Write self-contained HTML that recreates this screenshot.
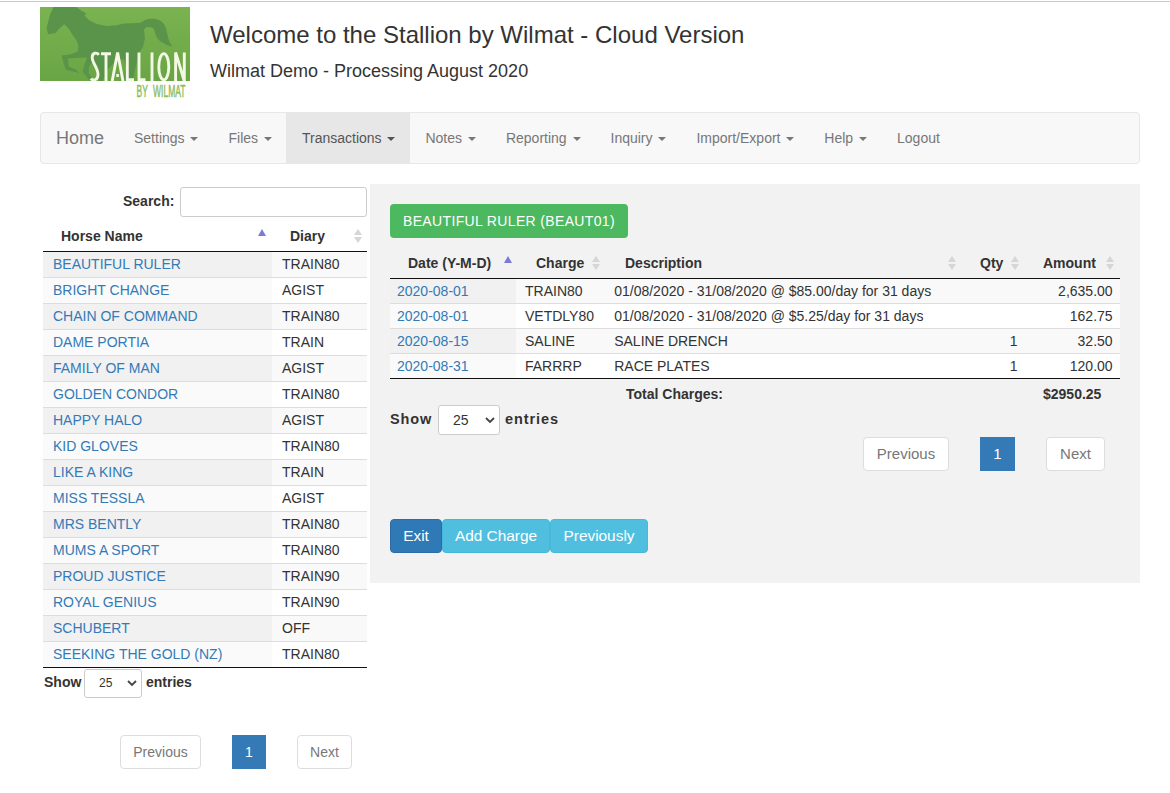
<!DOCTYPE html>
<html><head><meta charset="utf-8">
<style>
*{box-sizing:border-box;margin:0;padding:0}
html,body{width:1170px;height:793px;overflow:hidden;background:#fff}
body{font-family:"Liberation Sans",sans-serif;font-size:14px;color:#333;position:relative}
.abs{position:absolute}
#topline{left:0;top:1px;width:1170px;height:1px;background:#c9c9c9}
#logo{left:40px;top:7px;width:150px;height:74px;background:linear-gradient(#7ab04f,#6aa443);overflow:hidden}
.t1{left:210px;top:23px;font-size:24px;line-height:24px;color:#333;white-space:nowrap}
.t2{left:210px;top:62px;font-size:18px;line-height:18px;color:#333;white-space:nowrap}
#nav{left:40px;top:112px;width:1100px;height:52px;background:#f8f8f8;border:1px solid #e7e7e7;border-radius:4px}
#nav .brand{position:absolute;left:0;top:0;height:50px;padding:0 15px;font-size:18px;line-height:50px;color:#777}
#nav ul{position:absolute;left:78px;top:0;list-style:none;display:flex;height:50px}
#nav li{padding:0 15px;line-height:50px;color:#777;white-space:nowrap}
#nav li.act{background:#e7e7e7;color:#555;margin-left:-1px;padding-left:16px}
.caret{display:inline-block;width:0;height:0;margin-left:2px;vertical-align:middle;border-top:4px solid;border-right:4px solid transparent;border-left:4px solid transparent}
/* left table */
.lbl{font-weight:bold;white-space:nowrap}
.inp{border:1px solid #ccc;border-radius:3px;background:#fff}
.ltab{left:43px;width:324px}
.row{position:absolute;left:0;width:324px;height:26px;border-top:1px solid #ddd}
.row .c1{position:absolute;left:0;top:0;width:229px;height:25px}
.row .c2{position:absolute;left:229px;top:0;width:95px;height:25px}
.row .n{position:absolute;left:10px;top:4px;color:#337ab7;white-space:nowrap;line-height:16px}
.row .d{position:absolute;left:10px;top:4px;color:#333;white-space:nowrap;line-height:16px}
.odd .c1{background:#f1f1f1}.odd .c2{background:#f9f9f9}
.even .c1{background:#fafafa}.even .c2{background:#fff}
.pg{position:absolute;height:34px;border:1px solid #ddd;border-radius:4px;background:#fff;color:#777;text-align:center;line-height:32px;white-space:nowrap}
.pg.cur{background:#337ab7;border-color:#337ab7;color:#fff;border-radius:0}
.up{position:absolute;width:0;height:0;border-left:4px solid transparent;border-right:4px solid transparent;border-bottom:7px solid #7b7bd6}
.dbl{position:absolute;width:8px;height:15px}
.dbl:before{content:"";position:absolute;left:0;top:0;border-left:4px solid transparent;border-right:4px solid transparent;border-bottom:6px solid #d6d6d6}
.dbl:after{content:"";position:absolute;left:0;top:8px;border-left:4px solid transparent;border-right:4px solid transparent;border-top:6px solid #d6d6d6}
/* right panel */
#panel{left:370px;top:184px;width:770px;height:399px;background:#f2f2f2}
.btn{position:absolute;height:34px;border-radius:4px;color:#fff;text-align:center;line-height:34px;white-space:nowrap}
.rrow{position:absolute;left:390px;width:730px;height:25px;border-top:1px solid #ddd}
.rrow div{position:absolute;top:0;height:24px}
.rrow .dt{color:#337ab7}
.rrow span{position:absolute;top:4px;line-height:16px;white-space:nowrap}
.rodd .s{background:#f1f1f1}.rodd .o{background:#f9f9f9}
.reven .s{background:#fafafa}.reven .o{background:#fff}
</style></head><body>
<div id="topline" class="abs"></div>
<svg class="abs" style="left:40px;top:7px" width="150" height="91" viewBox="0 0 150 91">
<defs><linearGradient id="lg" x1="0" y1="0" x2="0" y2="1"><stop offset="0" stop-color="#7ab350"/><stop offset="1" stop-color="#6aa545"/></linearGradient><clipPath id="cl"><rect x="0" y="0" width="150" height="74"/></clipPath></defs>
<rect x="0" y="0" width="150" height="74" fill="url(#lg)"/>
<path d="M13.6,0 L36,0 L41.6,3.8 L46.4,6.6 L44.5,8.5 L49.2,13.2 L56.8,17 L66.2,19 L75,18.4 L84.2,16.6 L98.4,16.1 L102.2,15.1 C104,13 107,12 111,11.8 C118,11.5 122,14 124.5,18 C127,22 127,27 128.5,32 C129.5,35 131,37.5 132.4,39.7 C129,39 124,37 120,34 C116.5,31 115,27 114.5,23.7 C114,21.5 112.5,20.3 110,20.3 L106,20.3 L104,22.7 L105,31.2 L103,39.7 L98.4,47.3 L96.5,56.8 L94.6,64.3 L92.7,75 L82,75 L86,62 L84,52 L75,55 L68,62 L62,75 L59,75 L56,63 L51.5,55.5 L48.8,60 L48.8,66 L54,75 L52,75 L47.8,71.1 L42.5,64.8 L44.7,56.8 L47,50.5 L36,51 L28,51.5 L28.8,59.5 L36.2,62.7 L38.8,66.4 L36.2,65.2 L25.6,62.7 L21.9,50.5 L21.9,48.4 L30,47.5 L37.8,44.6 L38.3,38.3 L36.2,33 L32.8,28.3 L28.3,21.2 L24.2,17.2 L19.2,21.7 L15.2,26.3 L8.1,27.3 L6.6,21.2 L7.6,16.7 L10.1,7.6 Z" fill="#5a944a" clip-path="url(#cl)"/>
<g fill="none" stroke="#f3f8e4" stroke-width="2.9">
<path d="M58.8,47.8 C57,45.3 52.2,45.3 52.2,50.5 C52.2,56 58,61 58,67.5 C58,73.5 52.6,74.2 51,71.5"/>
<path d="M61,46.7 H71 M66,45.4 V74"/>
<path d="M72.2,74 L77.6,45.4 L83,74 M76.3,68.5 H78.9"/>
<path d="M87.3,45.4 V72.8 H94"/>
<path d="M99,45.4 V72.8 H105.5"/>
<path d="M112,45.4 V74"/>
<ellipse cx="123.8" cy="59.7" rx="5" ry="13.1"/>
<path d="M135.6,74 V45.4 L144.3,74 V45.4"/>
</g>
<g fill="#8dbd5d" stroke="#8dbd5d" stroke-width="0.5" font-family="Liberation Sans" font-size="16.5"><text x="96.6" y="89.5" textLength="11.2" lengthAdjust="spacingAndGlyphs">BY</text><text x="113" y="89.5" textLength="32.6" lengthAdjust="spacingAndGlyphs">WILMAT</text></g>
</svg>
<div class="abs t1">Welcome to the Stallion by Wilmat - Cloud Version</div>
<div class="abs t2">Wilmat Demo - Processing August 2020</div>

<div id="nav" class="abs">
  <div class="brand">Home</div>
  <ul>
    <li>Settings <span class="caret"></span></li>
    <li>Files <span class="caret"></span></li>
    <li class="act">Transactions <span class="caret"></span></li>
    <li>Notes <span class="caret"></span></li>
    <li>Reporting <span class="caret"></span></li>
    <li>Inquiry <span class="caret"></span></li>
    <li>Import/Export <span class="caret"></span></li>
    <li>Help <span class="caret"></span></li>
    <li>Logout</li>
  </ul>
</div>

<!-- LEFT -->
<div class="abs lbl" style="left:123px;top:193px;line-height:16px">Search:</div>
<div class="abs inp" style="left:180px;top:187px;width:187px;height:30px"></div>

<div class="abs lbl" style="left:61px;top:228px;line-height:16px">Horse Name</div>
<div class="up" style="left:258px;top:229px"></div>
<div class="abs lbl" style="left:290px;top:228px;line-height:16px">Diary</div>
<div class="dbl" style="left:354px;top:229px"></div>

<div class="abs ltab" style="top:251px;height:417px">
<div class="row odd" style="top:0px"><div class="c1"><span class="n">BEAUTIFUL RULER</span></div><div class="c2"><span class="d">TRAIN80</span></div></div>
<div class="row even" style="top:26px"><div class="c1"><span class="n">BRIGHT CHANGE</span></div><div class="c2"><span class="d">AGIST</span></div></div>
<div class="row odd" style="top:52px"><div class="c1"><span class="n">CHAIN OF COMMAND</span></div><div class="c2"><span class="d">TRAIN80</span></div></div>
<div class="row even" style="top:78px"><div class="c1"><span class="n">DAME PORTIA</span></div><div class="c2"><span class="d">TRAIN</span></div></div>
<div class="row odd" style="top:104px"><div class="c1"><span class="n">FAMILY OF MAN</span></div><div class="c2"><span class="d">AGIST</span></div></div>
<div class="row even" style="top:130px"><div class="c1"><span class="n">GOLDEN CONDOR</span></div><div class="c2"><span class="d">TRAIN80</span></div></div>
<div class="row odd" style="top:156px"><div class="c1"><span class="n">HAPPY HALO</span></div><div class="c2"><span class="d">AGIST</span></div></div>
<div class="row even" style="top:182px"><div class="c1"><span class="n">KID GLOVES</span></div><div class="c2"><span class="d">TRAIN80</span></div></div>
<div class="row odd" style="top:208px"><div class="c1"><span class="n">LIKE A KING</span></div><div class="c2"><span class="d">TRAIN</span></div></div>
<div class="row even" style="top:234px"><div class="c1"><span class="n">MISS TESSLA</span></div><div class="c2"><span class="d">AGIST</span></div></div>
<div class="row odd" style="top:260px"><div class="c1"><span class="n">MRS BENTLY</span></div><div class="c2"><span class="d">TRAIN80</span></div></div>
<div class="row even" style="top:286px"><div class="c1"><span class="n">MUMS A SPORT</span></div><div class="c2"><span class="d">TRAIN80</span></div></div>
<div class="row odd" style="top:312px"><div class="c1"><span class="n">PROUD JUSTICE</span></div><div class="c2"><span class="d">TRAIN90</span></div></div>
<div class="row even" style="top:338px"><div class="c1"><span class="n">ROYAL GENIUS</span></div><div class="c2"><span class="d">TRAIN90</span></div></div>
<div class="row odd" style="top:364px"><div class="c1"><span class="n">SCHUBERT</span></div><div class="c2"><span class="d">OFF</span></div></div>
<div class="row even" style="top:390px"><div class="c1"><span class="n">SEEKING THE GOLD (NZ)</span></div><div class="c2"><span class="d">TRAIN80</span></div></div>
</div>
<div class="abs" style="left:43px;top:251px;width:324px;height:1px;background:#111"></div>
<div class="abs" style="left:43px;top:667px;width:324px;height:1px;background:#111"></div>

<div class="abs lbl" style="left:44px;top:674px;line-height:16px">Show</div>
<div class="abs inp" style="left:84px;top:669px;width:58px;height:29px"></div>
<div class="abs" style="left:99px;top:676px;font-size:12px;line-height:14px;color:#333">25</div>
<svg class="abs" style="left:127px;top:680px" width="10" height="7" viewBox="0 0 10 7"><path d="M1,1 L5,5 L9,1" fill="none" stroke="#444" stroke-width="1.8"/></svg>
<div class="abs lbl" style="left:146px;top:674px;line-height:16px">entries</div>

<div class="pg" style="left:120px;top:735px;width:81px">Previous</div>
<div class="pg cur" style="left:232px;top:735px;width:34px">1</div>
<div class="pg" style="left:297px;top:735px;width:55px">Next</div>

<!-- RIGHT -->
<div id="panel" class="abs"></div>
<div class="btn" style="left:390px;top:204px;width:238px;background:#4cb860;border-radius:4px;letter-spacing:0.35px">BEAUTIFUL RULER (BEAUT01)</div>

<div class="abs lbl" style="left:408px;top:255px;line-height:16px">Date (Y-M-D)</div>
<div class="up" style="left:504px;top:256px"></div>
<div class="abs lbl" style="left:536px;top:255px;line-height:16px">Charge</div>
<div class="dbl" style="left:592px;top:256px"></div>
<div class="abs lbl" style="left:625px;top:255px;line-height:16px">Description</div>
<div class="dbl" style="left:948px;top:256px"></div>
<div class="abs lbl" style="left:980px;top:255px;line-height:16px">Qty</div>
<div class="dbl" style="left:1011px;top:256px"></div>
<div class="abs lbl" style="left:1043px;top:255px;line-height:16px">Amount</div>
<div class="dbl" style="left:1106px;top:256px"></div>
<div id="rtab">
<div class="rrow rodd" style="top:278px"><div class="s" style="left:0;width:126px"><span class="dt" style="left:7px">2020-08-01</span></div><div class="o" style="left:126px;width:604px"><span style="left:9px">TRAIN80</span><span style="left:98.2px">01/08/2020 - 31/08/2020 @ $85.00/day for 31 days</span><span style="right:102.4px"></span><span style="right:7.4px">2,635.00</span></div></div>
<div class="rrow reven" style="top:303px"><div class="s" style="left:0;width:126px"><span class="dt" style="left:7px">2020-08-01</span></div><div class="o" style="left:126px;width:604px"><span style="left:9px">VETDLY80</span><span style="left:98.2px">01/08/2020 - 31/08/2020 @ $5.25/day for 31 days</span><span style="right:102.4px"></span><span style="right:7.4px">162.75</span></div></div>
<div class="rrow rodd" style="top:328px"><div class="s" style="left:0;width:126px"><span class="dt" style="left:7px">2020-08-15</span></div><div class="o" style="left:126px;width:604px"><span style="left:9px">SALINE</span><span style="left:98.2px">SALINE DRENCH</span><span style="right:102.4px">1</span><span style="right:7.4px">32.50</span></div></div>
<div class="rrow reven" style="top:353px"><div class="s" style="left:0;width:126px"><span class="dt" style="left:7px">2020-08-31</span></div><div class="o" style="left:126px;width:604px"><span style="left:9px">FARRRP</span><span style="left:98.2px">RACE PLATES</span><span style="right:102.4px">1</span><span style="right:7.4px">120.00</span></div></div>
</div>
<div class="abs" style="left:390px;top:278px;width:730px;height:1px;background:#111"></div>
<div class="abs" style="left:390px;top:378px;width:730px;height:1px;background:#111"></div>

<div class="abs lbl" style="left:626px;top:386px;line-height:16px">Total Charges:</div>
<div class="abs lbl" style="left:1043px;top:386px;line-height:16px">$2950.25</div>

<div class="abs lbl" style="left:390px;top:411px;line-height:16px;font-size:14.5px;letter-spacing:0.9px">Show</div>
<div class="abs inp" style="left:438px;top:405px;width:62px;height:30px"></div>
<div class="abs" style="left:453px;top:412px;font-size:14px;line-height:16px;color:#333">25</div>
<svg class="abs" style="left:485px;top:417px" width="10" height="7" viewBox="0 0 10 7"><path d="M1,1 L5,5 L9,1" fill="none" stroke="#444" stroke-width="1.8"/></svg>
<div class="abs lbl" style="left:505px;top:411px;line-height:16px;font-size:14.5px;letter-spacing:0.9px">entries</div>

<div class="pg" style="left:863px;top:437px;width:86px;font-size:15px">Previous</div>
<div class="pg cur" style="left:980px;top:437px;width:35px;font-size:15px">1</div>
<div class="pg" style="left:1046px;top:437px;width:59px;font-size:15px">Next</div>

<div class="btn" style="left:390px;top:519px;width:52px;background:#2f79b6;border:1px solid #2e6da4;line-height:32px;font-size:15.4px">Exit</div>
<div class="btn" style="left:442px;top:519px;width:108px;background:#50bfdf;border:1px solid #46b8da;line-height:32px;font-size:15.4px">Add Charge</div>
<div class="btn" style="left:550px;top:519px;width:98px;background:#50bfdf;border:1px solid #46b8da;line-height:32px;font-size:15.4px">Previously</div>

</body></html>
